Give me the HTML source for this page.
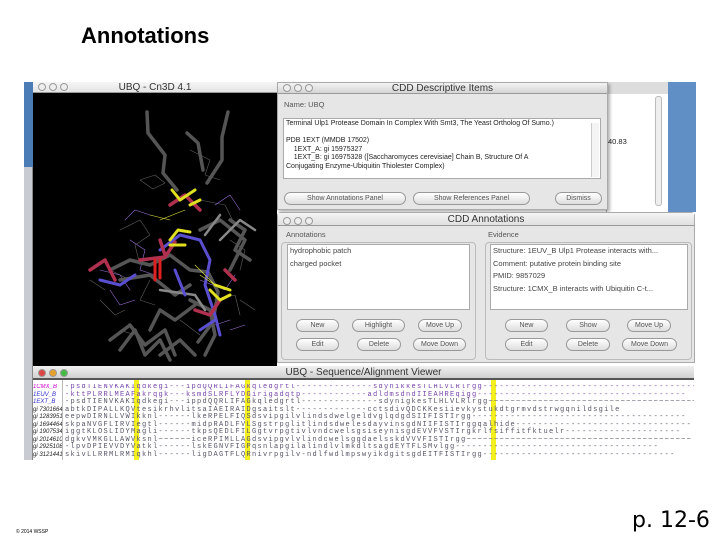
<!DOCTYPE html>
<html><head><meta charset="utf-8"><style>
*{margin:0;padding:0;box-sizing:border-box}
body{width:720px;height:540px;background:#fff;position:relative;overflow:hidden;font-family:"Liberation Sans",sans-serif}
.a{position:absolute}
.tb{background:linear-gradient(#f2f2f2,#d4d4d4);border-bottom:1px solid #999;font-size:10px;color:#333;text-align:center;line-height:12px}
.btn{position:absolute;height:13px;border:1px solid #999;border-radius:7px;background:linear-gradient(#fff,#ddd);font-size:7px;color:#555;text-align:center;line-height:11px}
.win{background:#e6e6e6}
.dots{position:absolute;left:5px;top:2px}
.dots i{display:inline-block;width:8px;height:8px;border-radius:50%;border:1px solid #999;margin-right:3px;background:#eee}
.box{position:absolute;background:#fff;border:1px solid #aaa}
.sm{font-size:7.5px;color:#222;white-space:nowrap}
.seq{font-family:"Liberation Mono",monospace;font-size:7px;line-height:7.5px;white-space:pre;color:#333;letter-spacing:1.3px}
</style></head><body>
<div class="a" style="left:81px;top:23px;font-family:'Liberation Sans',sans-serif;font-size:22px;font-weight:bold;color:#000">Annotations</div>

<div class="a" style="left:24px;top:82px;width:9px;height:85px;background:#4b7cb5"></div>
<div class="a" style="left:24px;top:167px;width:9px;height:293px;background:#c8ccd2;border-right:1px solid #888"></div>
<div class="a" style="left:606px;top:82px;width:62px;height:130px;background:#fff;border-left:1px solid #aaa"></div>
<div class="a" style="left:606px;top:82px;width:62px;height:12px;background:#ddd"></div>
<div class="a" style="left:655px;top:96px;width:7px;height:110px;background:#eee;border:1px solid #bbb;border-radius:3px"></div>
<div class="a sm" style="left:608px;top:137px">40.83</div>
<div class="a" style="left:668px;top:82px;width:28px;height:130px;background:#5f8fc4"></div>

<div class="a tb" style="left:33px;top:82px;width:244px;height:11px;background:linear-gradient(#f6f6f6,#e4e4e4)"><div class="dots" style="top:1px"><i></i><i></i><i></i></div>UBQ - Cn3D 4.1</div>
<div class="a" style="left:33px;top:93px;width:244px;height:273px;background:#000"></div>
<svg class="a" style="left:33px;top:93px" width="244" height="273" viewBox="33 93 244 273">
<g fill="none" stroke-linecap="round" stroke-linejoin="round">
<g stroke="#777" stroke-width="0.6" opacity="0.8">
<path d="M140 180l15-5 10 8-12 6zM190 150l20 10-5 15 15 5M120 230l20-10 10 15-15 10 5 20M200 200l25 5 10 20M150 280l-10 20 15 5M230 240l15 10-5 20M110 270l20 10M180 320l20 15M215 300l20-5 5 20M90 280l15 10M100 300l15 15 10-5M120 330l15 5M240 300l15 10"/>
</g>
<g stroke="#9a6fd8" stroke-width="0.6">
<path d="M130 240l15 10-5 20 15 5M100 270l20 5 10 15M200 280l25 10 10-15M230 320l-15 5M125 220l10-10 15 5M215 205l15-10 10 15M110 290l10 15 15-5M230 330l15-5"/>
</g>
<g stroke="#555" stroke-width="3.5">
<path d="M147 112l1 21 17 22-2 18 14 17M228 112l-6 25v23l-15 23M187 133l11 10 5 27"/>
<path d="M110 270l20-10 20 5 20-10 20 15 18 2 10 20-5 30-15 20M120 280l30-5 25 20 15-10M200 230l20-10 25 20-15 30M230 220l15 10-10 20 15 10M110 340l20-15 15 20 20-15 10 25M150 330l10-20 15 10 20-15M190 300l20 10 5 25-10 20M120 350l15-20 10 25 15-15 10 20M160 355l20-15 15 15"/>
</g>
<g stroke="#888" stroke-width="2.5"><path d="M160 290l35 5 10 15M220 240l20-20 15 10M205 235l15-20"/></g>
<g stroke="#5a4fd0" stroke-width="3"><path d="M100 280l20 5 15-10M160 250l20-15 20 5 10 20-5 25 10 30 5 20M175 270l10 25M200 330l15-10"/></g>
<g stroke="#b03050" stroke-width="3.5"><path d="M90 270l15-10 10 20M140 260l25-3 10-15M160 240l5 15M170 205l15-10 15 15M195 310l15 5 10-15M225 270l10 10"/></g>
<g stroke="#e02020" stroke-width="3"><path d="M155 260v20M160 260v18"/></g>
<g stroke="#e0e020" stroke-width="3"><path d="M172 190l8 10M195 190l-15 10M200 200l-10 5M170 240l8-10 12 2M170 245l15 0M210 290l10 10 10-5M215 285l15 5"/></g>
<g stroke="#e8e840" stroke-width="0.6"><path d="M160 220l25-10M150 215l20 5M195 265l20 20M200 275l15 10"/></g>
</g></svg>

<div class="a win" style="left:277px;top:82px;width:331px;height:128px;border:1px solid #aaa;box-shadow:2px 2px 3px rgba(0,0,0,.3)">
<div class="tb" style="height:11px;position:relative"><div class="dots" style="top:1px"><i></i><i></i><i></i></div>CDD Descriptive Items</div>
<div class="a sm" style="left:6px;top:17px;color:#555">Name: UBQ</div>
<div class="box" style="left:5px;top:35px;width:318px;height:61px"></div>
<div class="a sm" style="left:8px;top:37px;font-size:7px;line-height:8.5px">Terminal Ulp1 Protease Domain In Complex With Smt3, The Yeast Ortholog Of Sumo.)<br><br>PDB 1EXT (MMDB 17502)<br>&nbsp;&nbsp;&nbsp;&nbsp;1EXT_A: gi 15975327<br>&nbsp;&nbsp;&nbsp;&nbsp;1EXT_B: gi 16975328 ([Saccharomyces cerevisiae] Chain B, Structure Of A<br>Conjugating Enzyme-Ubiquitin Thiolester Complex)</div>
<div class="a" style="left:313px;top:40px;width:8px;height:54px;border-left:1px solid #ccc;background:#f4f4f4"></div>
<div class="btn" style="left:6px;top:109px;width:122px">Show Annotations Panel</div>
<div class="btn" style="left:135px;top:109px;width:117px">Show References Panel</div>
<div class="btn" style="left:277px;top:109px;width:47px">Dismiss</div>
</div>

<div class="a win" style="left:277px;top:212px;width:418px;height:151px;border:1px solid #aaa;border-radius:4px 4px 0 0">
<div class="tb" style="height:13px;line-height:14px;position:relative;background:linear-gradient(#f4f4f4,#e0e0e0)"><div class="dots" style="top:3px"><i></i><i></i><i></i></div>CDD Annotations</div>
<div class="a sm" style="left:8px;top:17px;color:#555">Annotations</div>
<div class="a sm" style="left:210px;top:17px;color:#555">Evidence</div>
<div class="a" style="left:3px;top:29px;width:195px;height:118px;border:1px solid #bbb;border-radius:4px"></div>
<div class="a" style="left:207px;top:29px;width:207px;height:118px;border:1px solid #bbb;border-radius:4px"></div>
<div class="box" style="left:9px;top:31px;width:183px;height:66px"></div>
<div class="box" style="left:212px;top:31px;width:198px;height:66px"></div>
<div class="a sm" style="left:12px;top:32px;line-height:12.5px;color:#444">hydrophobic patch<br>charged pocket</div>
<div class="a sm" style="left:215px;top:32px;line-height:12.5px;color:#444">Structure: 1EUV_B Ulp1 Protease interacts with...<br>Comment: putative protein binding site<br>PMID: 9857029<br>Structure: 1CMX_B interacts with Ubiquitin C-t...</div>
<div class="btn" style="left:18px;top:106px;width:43px">New</div>
<div class="btn" style="left:74px;top:106px;width:53px">Highlight</div>
<div class="btn" style="left:140px;top:106px;width:44px">Move Up</div>
<div class="btn" style="left:18px;top:125px;width:43px">Edit</div>
<div class="btn" style="left:79px;top:125px;width:44px">Delete</div>
<div class="btn" style="left:135px;top:125px;width:53px">Move Down</div>
<div class="btn" style="left:227px;top:106px;width:43px">New</div>
<div class="btn" style="left:288px;top:106px;width:44px">Show</div>
<div class="btn" style="left:349px;top:106px;width:44px">Move Up</div>
<div class="btn" style="left:227px;top:125px;width:43px">Edit</div>
<div class="btn" style="left:288px;top:125px;width:44px">Delete</div>
<div class="btn" style="left:344px;top:125px;width:55px">Move Down</div>
</div>

<div class="a tb" style="left:33px;top:366px;width:661px;height:14px;line-height:13px;border-bottom:2px solid #555;background:linear-gradient(#f0f0f0,#d0d0d0)">
<div class="dots" style="top:2px"><i style="background:#d44"></i><i style="background:#e9a02a"></i><i style="background:#4b4"></i></div>UBQ - Sequence/Alignment Viewer</div>
<div class="a" style="left:33px;top:380px;width:661px;height:80px;background:#fff"></div>
<div class="a" style="left:134px;top:380px;width:5px;height:80px;background:#f4f020"></div>
<div class="a" style="left:245px;top:380px;width:5px;height:80px;background:#f4f020"></div>
<div class="a" style="left:491px;top:380px;width:5px;height:80px;background:#f4f020"></div>
<div class="a seq" style="left:33px;top:384px;width:29px;overflow:hidden;font-family:'Liberation Sans',sans-serif;font-size:6px;letter-spacing:0;font-style:italic;color:#222"><span style="color:#c0c">1CMX_B</span>
<span style="color:#33c">1EUV_B</span>
<span style="color:#33c">1EXT_B</span>
gi 7301664
gi 12839519
gi 16944640
gi 19075344
gi 20146104
gi 29251081
gi 31214419</div>
<div class="a" style="left:62px;top:380px;width:1px;height:80px;background:#bbb"></div>
<div class="a seq" style="left:65px;top:384px;width:629px;height:76px;overflow:hidden;color:#556"><span style="color:#74a">-psdTIENVKAKIqdkegi---ipdQQRLIFAGkqledgrtl--------------sdynikkesTLHLVLRlrgg----------------------------------------</span>
<span style="color:#74a">-kttPLRRLMEAFakrqgk---ksmdSLRFLYDGirigadqtp------------adldmsdndIIEAHREqigg--------------------------------------</span>
-psdTIENVKAKIqdkegi---ippdQQRLIFAGkqledgrtl--------------sdynigkesTLHLVLRlrgg~~~~~~~~~~~~~~~~~~~~~~~~~~~~~~~~~~~~~~~
abtkDIPALLKQVtesikrhvlitsaIAEIRAIDgsaitslt-------------cctsdivQDCKKesiievkystukdtgrmvdstrwgqnildsgile
eepwDIRNLLVWIkknl------lkeRPELFIQSdsvipgilvlindsdwelgeldvglqdgdSIIFISTIrgg---------------------------------------
skpaNVGFLIRVIegtl------midpRADLFVLSgstrpglitlindsdwelesdayvinsgdNIIFISTIrggqalhide--------------------------------
iggtKLOSLIDYMagli------tkpsQEDLFILGgtvrpgtivlvndcwelsgsiseynisgdEVVFVSTIrgkrlfsiffitfktuelr---------------------
dgkvVMKGLLAWVksnl~~~~~~iceRPIMLLAGdsvipgvlvlindcwelsggdaelsskdVVVFISTIrgg~~~~~~~~~~~~~~~~~~~~~~~~~~~~~~~~~~~~~~~~~
-lpvDPIEVVDYVatkl------lskEGNVFIGPqsnlapgilalindlvlmkdltsagdEYTFLSMvlgg-------------------------------------
skivLLRRMLRMIqkhl------ligDAGTFLQRnivrpgilv-ndlfwdlmpswyikdgitsgdEITFISTIrgg-----------------------------------</div>

<div class="a" style="left:16px;top:529px;font-size:5px;color:#000">© 2014 WSSP</div>
<div class="a" style="left:632px;top:508px;font-family:'DejaVu Sans',sans-serif;font-size:22px;color:#000">p. 12-6</div>
</body></html>
